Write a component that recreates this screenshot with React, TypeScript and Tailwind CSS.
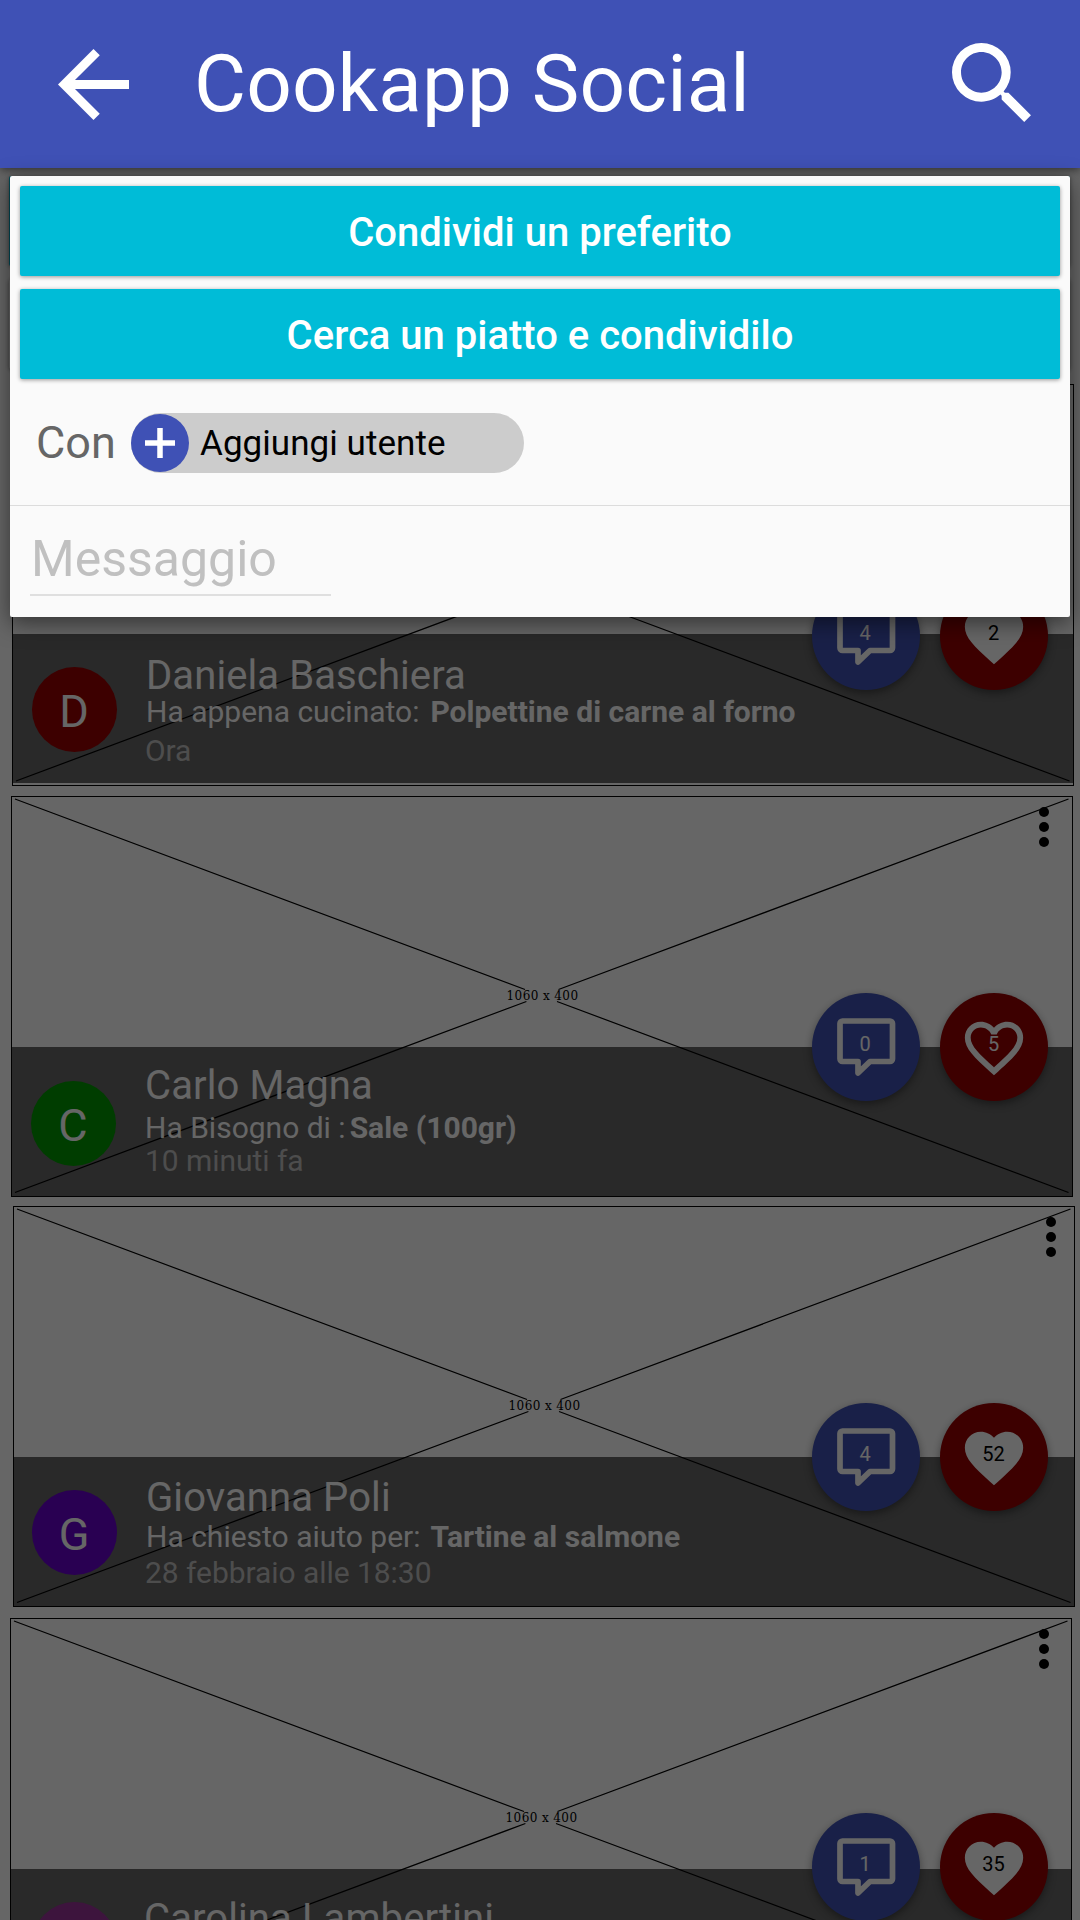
import React from "react";

type Post = {
  card: string;
  media: string;
  dots: string;
  fabs: string;
  avatar: string;
  text: string;
  name: string;
  initial?: string;
  action?: string;
  subject?: string;
  time?: string;
  actionRow?: string;
  timeRow?: string;
  comments: number;
  likes: number;
  liked: boolean;
};

const posts: Post[] = [
  {
    card: "h-[402px] ml-[12px] mt-[14px] mb-[10px]",
    media: "h-[249px]",
    dots: "left-[1025px]",
    fabs: "top-[198px] left-[799px]",
    avatar: "bg-[#990000] ml-[19px] mt-[33px]",
    text: "pt-[22px] ml-[29px]",
    name: "Daniela Baschiera",
    initial: "D",
    action: "Ha appena cucinato:",
    subject: "Polpettine di carne al forno",
    time: "Ora",
    actionRow: "gap-[11px]",
    timeRow: "mt-[7px] -ml-px",
    comments: 4,
    likes: 2,
    liked: true,
  },
  {
    card: "h-[401px] ml-[11px] mb-[9px]",
    media: "h-[250px]",
    dots: "left-[1027px]",
    fabs: "top-[197px] left-[800px]",
    avatar: "bg-[#009900] ml-[19px] mt-[34px]",
    text: "pt-[19px] ml-[29px]",
    name: "Carlo Magna",
    initial: "C",
    action: "Ha Bisogno di :",
    subject: "Sale (100gr)",
    time: "10 minuti fa",
    actionRow: "gap-[4px] mt-[6px]",
    timeRow: "mt-px",
    comments: 0,
    likes: 5,
    liked: false,
  },
  {
    card: "h-[401px] ml-[13px] mb-[11px]",
    media: "h-[250px]",
    dots: "left-[1032px]",
    fabs: "top-[197px] left-[798px]",
    avatar: "bg-[#6600cc] ml-[18px] mt-[33px]",
    text: "pt-[21px] ml-[29px]",
    name: "Giovanna Poli",
    initial: "G",
    action: "Ha chiesto aiuto per:",
    subject: "Tartine al salmone",
    time: "28 febbraio alle 18:30",
    actionRow: "gap-[10px] mt-[3px]",
    timeRow: "mt-[4px] -ml-px",
    comments: 4,
    likes: 52,
    liked: true,
  },
  {
    card: "h-[401px] ml-[10px]",
    media: "h-[250px]",
    dots: "left-[1028px]",
    fabs: "top-[195px] left-[801px]",
    avatar: "bg-[#993399] ml-[21px] mt-[33px]",
    text: "pt-[30px] ml-[27px]",
    name: "Carolina Lambertini",
    comments: 1,
    likes: 35,
    liked: true,
  },
];

function Placeholder() {
  return (
    <svg className="absolute inset-0 size-full" viewBox="0 0 1060 399" fill="none">
      <path
        d="M3 2L513 192.500M3 395.500L514.400 204.500M1056.500 2L546.500 192.500M1056.500 395.500L545 204.500"
        stroke="#000"
        strokeWidth="1.2"
      />
    </svg>
  );
}

const HEART =
  "M12 21.35l-1.45-1.32C5.4 15.36 2 12.28 2 8.5 2 5.42 4.42 3 7.5 3c1.74 0 3.41.81 4.5 2.09C13.09 3.81 14.76 3 16.5 3 19.58 3 22 5.42 22 8.5c0 3.78-3.4 6.86-8.55 11.54L12 21.35z";

const HEART_OUTLINE =
  "M16.5 3c-1.74 0-3.41.81-4.5 2.09C10.91 3.81 9.24 3 7.5 3 4.42 3 2 5.42 2 8.5c0 3.78 3.4 6.86 8.55 11.54L12 21.35l1.45-1.32C18.6 15.36 22 12.28 22 8.5 22 5.42 19.58 3 16.5 3zm-4.4 15.55l-.1.1-.1-.1C7.14 14.24 4 11.39 4 8.5 4 6.5 5.5 5 7.5 5c1.54 0 3.04.99 3.57 2.36h1.87C13.46 5.99 14.96 5 16.5 5c2 0 3.5 1.5 3.5 3.5 0 2.89-3.14 5.74-7.9 10.05z";

function CommentFab({ count }: { count: number }) {
  return (
    <div className="relative size-[108px] rounded-full bg-[#3f51b5] shadow-[0_3px_8px_rgba(0,0,0,0.4)]">
      <svg className="absolute inset-0 size-full" viewBox="0 0 108 108" fill="none">
        <path
          d="M30.500 28H78A2.500 2.500 0 0 1 80.500 30.500V66A2.500 2.500 0 0 1 78 68.500H58L46 80V68.500H30.500A2.500 2.500 0 0 1 28 66V30.500A2.500 2.500 0 0 1 30.500 28Z"
          stroke="#fff"
          strokeWidth="5.700"
          strokeLinejoin="round"
        />
      </svg>
      <span className="absolute inset-x-0 top-[39px] pr-[2px] text-center text-[20px] leading-[24px] text-white">
        {count}
      </span>
    </div>
  );
}

function LikeFab({ count, liked }: { count: number; liked: boolean }) {
  return (
    <div className="relative size-[108px] rounded-full bg-[#990000] shadow-[0_3px_8px_rgba(0,0,0,0.4)]">
      <svg className="absolute left-[19px] top-[20px] size-[70px]" viewBox="0 0 24 24" fill="#fff">
        <path d={liked ? HEART : HEART_OUTLINE} />
      </svg>
      <span
        className={
          "absolute inset-x-0 top-[39px] pr-px text-center text-[20px] leading-[24px] " +
          (liked ? "text-black" : "text-white")
        }
      >
        {count}
      </span>
    </div>
  );
}

function PostCard({ post }: { post: Post }) {
  return (
    <article
      className={
        "relative flex w-[1062px] shrink-0 flex-col border border-black bg-white " + post.card
      }
    >
      <div className={"shrink-0 " + post.media} />
      <div className="flex h-[149px] bg-black/60">
        <div
          className={
            "relative z-10 flex size-[85px] shrink-0 items-center justify-center rounded-full text-[45px] leading-none text-white " +
            post.avatar
          }
        >
          {post.initial && <span className="pr-px pt-[3px]">{post.initial}</span>}
        </div>
        <div className={"relative z-10 flex flex-col whitespace-nowrap text-white " + post.text}>
          <h2 className="text-[40px] leading-[40px] tracking-[0.1px]">{post.name}</h2>
          {post.action && (
            <p className={"flex text-[30px] leading-[32px] " + post.actionRow}>
              <span>{post.action}</span>
              <b>{post.subject}</b>
            </p>
          )}
          {post.time && (
            <time className={"text-[30px] leading-[32px] tracking-[-0.05px] text-white/60 " + post.timeRow}>
              {post.time}
            </time>
          )}
        </div>
      </div>
      <Placeholder />
      <span className="absolute inset-x-0 top-[191px] pl-px text-center font-['DejaVu_Serif'] text-[12px] leading-[16px] tracking-[0.4px] text-black">
        1060 x 400
      </span>
      <div className={"absolute top-[10px] flex flex-col gap-[5px] " + post.dots}>
        <i className="size-[10px] rounded-full bg-black" />
        <i className="size-[10px] rounded-full bg-black" />
        <i className="size-[10px] rounded-full bg-black" />
      </div>
      <div className={"absolute -mt-px flex gap-[20px] " + post.fabs}>
        <CommentFab count={post.comments} />
        <LikeFab count={post.likes} liked={post.liked} />
      </div>
    </article>
  );
}

function ShareDialog() {
  return (
    <section
      role="dialog"
      className="absolute left-[10px] top-[176px] z-30 flex h-[441px] w-[1060px] flex-col rounded-[2px] bg-[#fafafa] pt-[10px] shadow-[0_6px_22px_rgba(0,0,0,0.5)]"
    >
      <div className="flex flex-col gap-[13px] px-[10px]">
        <button className="h-[90px] rounded-[2px] bg-[#00bcd7] pt-px text-[40px] font-medium leading-[90px] text-white shadow-[0_1px_4px_rgba(0,0,0,0.4)]">
          <span className="block h-[89px] leading-[91px]">Condividi un preferito</span>
        </button>
        <button className="h-[90px] rounded-[2px] bg-[#00bcd7] pt-px text-[40px] font-medium leading-[90px] text-white shadow-[0_1px_4px_rgba(0,0,0,0.4)]">
          <span className="block h-[89px] leading-[91px]">Cerca un piatto e condividilo</span>
        </button>
      </div>
      <div className="flex h-[127px] items-center border-b border-[#dcdcdc] pl-[26px] pt-px">
        <span className="w-[95px] text-[45px] leading-[60px] text-[#666]">Con</span>
        <div className="flex h-[60px] w-[393px] items-center rounded-full bg-[#ccc]">
          <div className="flex size-[58px] items-center justify-center rounded-full bg-[#3f51b5]">
            <svg className="size-[30px]" viewBox="0 0 30 30">
              <path d="M15 0V30M0 15H30" stroke="#fff" strokeWidth="5.500" />
            </svg>
          </div>
          <span className="ml-[11px] pt-[2px] text-[35px] leading-[58px] tracking-[0.05px] text-black">
            Aggiungi utente
          </span>
        </div>
      </div>
      <div className="ml-[20px] mt-[16px] flex h-[74px] w-[301px] items-center border-b-2 border-[#dfdfdf]">
        <span className="pl-px pt-px text-[50px] leading-[70px] text-[#c0c0c0]">Messaggio</span>
      </div>
    </section>
  );
}

export default function App() {
  return (
    <div className="relative flex h-[1920px] w-[1080px] flex-col overflow-hidden bg-white font-['Roboto',sans-serif]">
      <header className="relative z-20 flex h-[168px] shrink-0 items-center bg-[#3f51b5] text-white shadow-[0_2px_8px_rgba(0,0,0,0.5)]">
        <svg className="ml-[58px] size-[71px]" viewBox="4 4 16 16" fill="#fff">
          <path d="M20 11H7.830l5.590-5.590L12 4l-8 8 8 8 1.410-1.410L7.830 13H20v-2z" />
        </svg>
        <h1 className="ml-[65px] text-[80px] leading-[168px] tracking-[0.1px]">Cookapp Social</h1>
        <svg className="mb-[3px] ml-auto mr-[49px] size-[79px]" viewBox="3 3 17.500 17.500" fill="#fff">
          <path d="M15.500 14h-.79l-.28-.27A6.471 6.471 0 0 0 16 9.500 6.500 6.500 0 1 0 9.500 16c1.610 0 3.090-.59 4.230-1.570l.27.28v.79l5 4.990L20.490 19l-4.990-5zm-6 0C7.010 14 5 11.990 5 9.500S7.010 5 9.500 5 14 7.010 14 9.500 11.990 14 9.500 14z" />
        </svg>
      </header>
      <main className="relative flex h-[1752px] flex-col overflow-hidden">
        <div className="flex h-[202px] shrink-0 flex-col gap-[13px] px-[9px] pt-[8px]">
          <div className="h-[90px] w-[1061px] rounded-[2px] bg-[#00bcd7] shadow-[0_1px_4px_rgba(0,0,0,0.4)]" />
          <div className="h-[90px] w-[1061px] rounded-[2px] bg-white shadow-[0_1px_4px_rgba(0,0,0,0.4)]" />
        </div>
        {posts.map((post) => (
          <PostCard key={post.name} post={post} />
        ))}
        <div className="absolute inset-0 z-20 bg-black/60" />
      </main>
      <ShareDialog />
    </div>
  );
}
